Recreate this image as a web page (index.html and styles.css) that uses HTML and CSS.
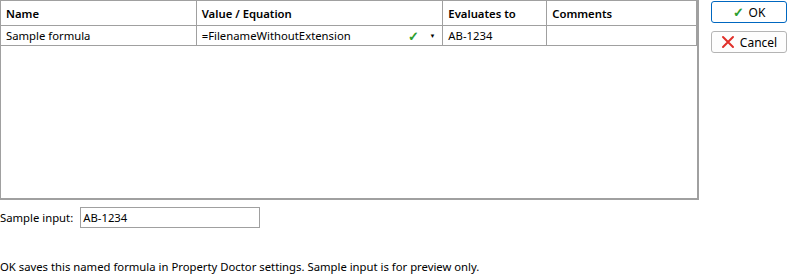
FILE: index.html
```html
<!DOCTYPE html>
<html lang="en">
<head>
    <meta charset="UTF-8">
    <title>Named formula</title>
    <link rel="stylesheet" href="styles.css">
</head>
<body>
    <div class="dialog">
        <div class="top">
            <div class="grid">
                <div class="row head">
                    <div class="cell c-name">Name</div>
                    <div class="cell c-value">Value / Equation</div>
                    <div class="cell c-eval">Evaluates to</div>
                    <div class="cell c-comm">Comments</div>
                </div>
                <div class="row">
                    <div class="cell c-name">Sample formula</div>
                    <div class="cell c-value">
                        <span class="expr">=FilenameWithoutExtension</span>
                        <span class="ok-mark">&#10003;</span>
                        <span class="drop">&#9660;</span>
                    </div>
                    <div class="cell c-eval">AB-1234</div>
                    <div class="cell c-comm"></div>
                </div>
            </div>
            <div class="buttons">
                <button class="btn btn-default">
                    <span class="check">&#10003;</span> OK
                </button>
                <button class="btn">
                    <svg class="x-icon" width="14" height="14" viewBox="0 0 14 14">
                        <path d="M2 2 L12 12 M12 2 L2 12" stroke="#e0302a" stroke-width="2" stroke-linecap="round"/>
                    </svg>
                    Cancel
                </button>
            </div>
        </div>
        <div class="sample">
            <label>Sample input:</label>
            <input type="text" value="AB-1234">
        </div>
        <div class="note">OK saves this named formula in Property Doctor settings. Sample input is for preview only.</div>
    </div>
</body>
</html>
```
FILE: styles.css
```css
* {
    margin: 0;
    padding: 0;
    box-sizing: border-box;
}

body {
    font-family: "Noto Sans", "Open Sans", sans-serif;
    font-size: 11.3px;
    color: #000;
    background: #fff;
    width: 788px;
    height: 275px;
    overflow: hidden;
}

.top {
    display: flex;
    gap: 12px;
}

.grid {
    width: 699px;
    height: 200px;
    border: 2px solid #a0a0a0;
    border-top-width: 1px;
    border-left-width: 1px;
}

.row {
    display: flex;
    height: 20px;
    border-bottom: 1px solid #a0a0a0;
}

.row.head {
    height: 25px;
    font-weight: 600;
}

.cell {
    padding: 0 5px;
    display: flex;
    align-items: center;
    border-right: 1px solid #a0a0a0;
    white-space: nowrap;
}

.c-name { width: 196px; }
.c-value { width: 247px; }
.c-eval { width: 104px; }
.c-comm { width: 150px; }

.expr {
    flex: 1;
}

.ok-mark {
    color: #2e9e2e;
    font-size: 13px;
    font-weight: 700;
    margin-right: 10px;
}

.drop {
    font-size: 6px;
    margin-right: 2px;
}

.buttons {
    display: flex;
    flex-direction: column;
    gap: 8px;
    padding-top: 1px;
}

.btn {
    width: 76px;
    height: 22px;
    border: 1px solid #b4b4b4;
    border-radius: 3px;
    background: #fdfdfd;
    font-family: inherit;
    font-size: 12px;
    display: flex;
    align-items: center;
    justify-content: center;
    gap: 5px;
}

.btn-default {
    border-color: #0067c0;
    background: #fff;
}

.check {
    color: #2e9e2e;
    font-weight: 700;
    font-size: 13px;
}

.sample {
    display: flex;
    align-items: center;
    gap: 7px;
    margin-top: 7px;
}

.sample input {
    width: 180px;
    height: 21px;
    border: 1px solid #a0a0a0;
    font-family: inherit;
    font-size: 11.3px;
    padding: 0 2px;
    outline: none;
}

.note {
    margin-top: 31px;
}
```
